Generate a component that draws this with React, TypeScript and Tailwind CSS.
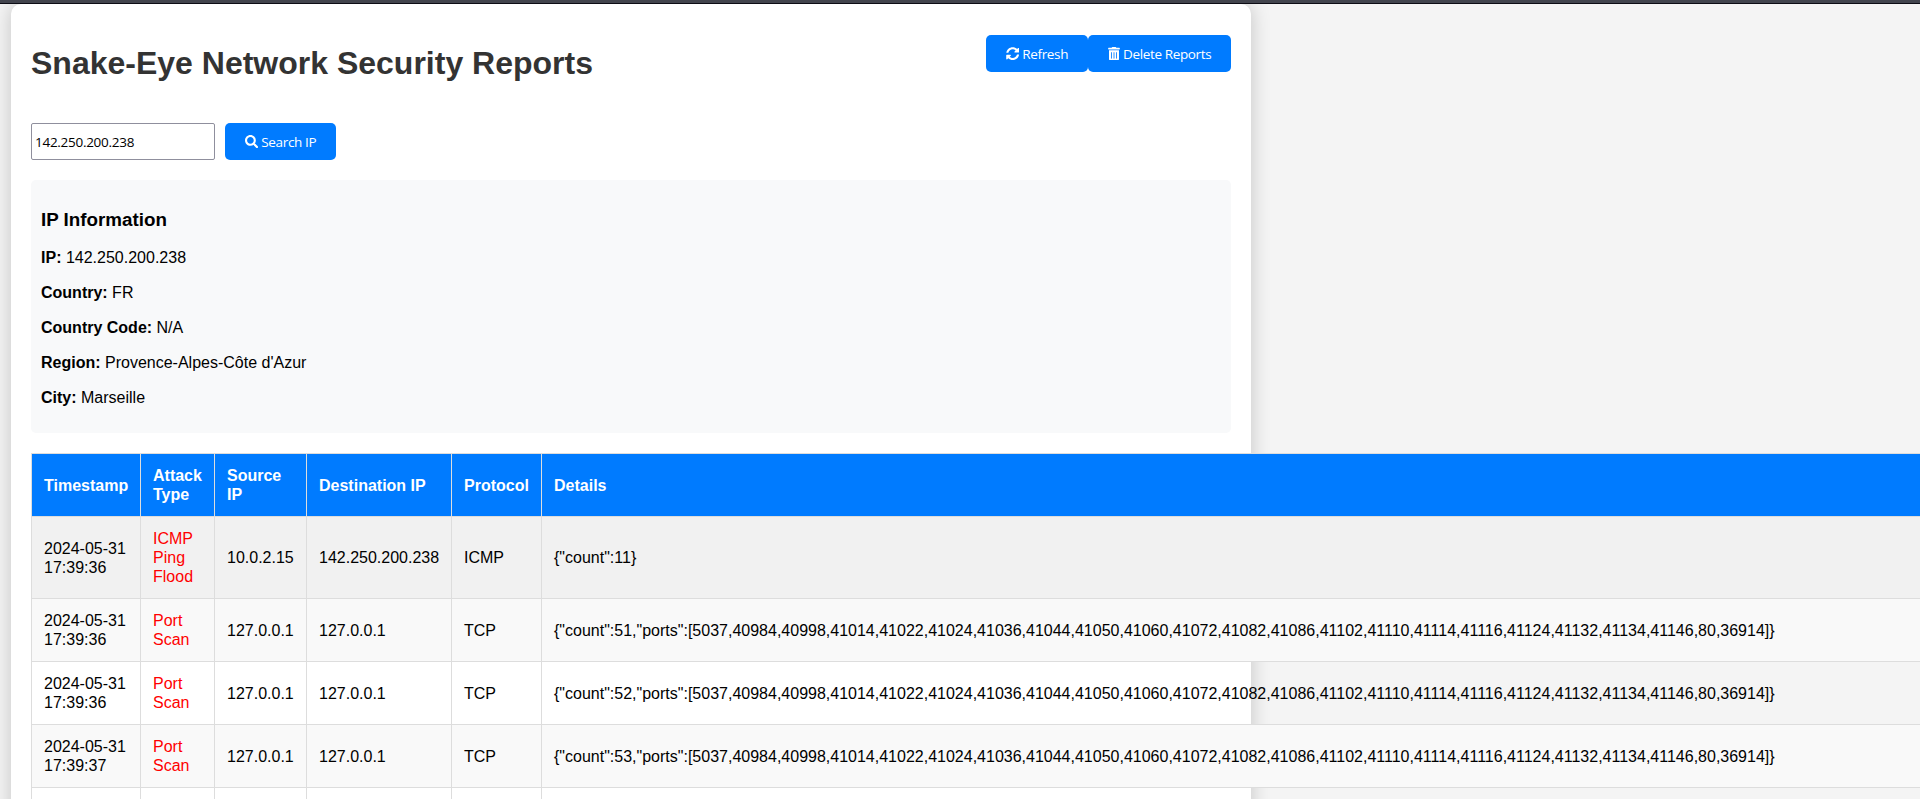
import type { ReactNode } from "react";
import { FaSearch, FaSyncAlt, FaTrashAlt } from "react-icons/fa";

type Report = {
  time: string;
  type: string;
  source: string;
  destination: string;
  protocol: string;
  details: string;
};

const PORTS =
  "5037,40984,40998,41014,41022,41024,41036,41044,41050,41060,41072,41082,41086,41102,41110,41114,41116,41124,41132,41134,41146,80,36914";

const scan = (time: string, count: number): Report => ({
  time,
  type: "Port Scan",
  source: "127.0.0.1",
  destination: "127.0.0.1",
  protocol: "TCP",
  details: `{"count":${count},"ports":[${PORTS}]}`,
});

const reports: Report[] = [
  {
    time: "2024-05-31 17:39:36",
    type: "ICMP Ping Flood",
    source: "10.0.2.15",
    destination: "142.250.200.238",
    protocol: "ICMP",
    details: '{"count":11}',
  },
  scan("2024-05-31 17:39:36", 51),
  scan("2024-05-31 17:39:36", 52),
  scan("2024-05-31 17:39:37", 53),
];

const info = [
  ["IP", "142.250.200.238"],
  ["Country", "FR"],
  ["Country Code", "N/A"],
  ["Region", "Provence-Alpes-Côte d'Azur"],
  ["City", "Marseille"],
];

const headings = ["Timestamp", "Attack Type", "Source IP", "Destination IP", "Protocol", "Details"];

function Button({ icon, width, children }: { icon: ReactNode; width: string; children: ReactNode }) {
  return (
    <button
      className={`flex h-[37px] items-center gap-[3px] whitespace-nowrap rounded-[5px] bg-[#007bff] pl-5 font-['Open_Sans',sans-serif] text-[13.5px] leading-[18px] tracking-[-0.36px] text-white ${width}`}
    >
      {icon}
      <span className="pt-px">{children}</span>
    </button>
  );
}

export default function App() {
  return (
    <div className="h-[799px] w-full overflow-hidden bg-[#f4f4f4] font-['Liberation_Sans',Arial,sans-serif] text-base leading-[19px] text-black">
      <div className="relative z-10 h-1 border-b border-[#0c0c14] bg-[#42444d]" />
      <div className="ml-[11px] h-[900px] w-[1240px] rounded-[10px] bg-white px-5 pt-[31px] shadow-[0_0_20px_rgba(0,0,0,0.2)]">
        <header className="flex h-[88px] items-start justify-between">
          <h1 className="mt-[10px] text-[32px] font-bold leading-[37px] text-[#333]">
            Snake-Eye Network Security Reports
          </h1>
          <div className="flex">
            <Button width="w-[102px]" icon={<FaSyncAlt size={13.333} />}>Refresh</Button>
            <Button width="w-[143px]" icon={<FaTrashAlt size={13.333} className="w-3" />}>Delete Reports</Button>
          </div>
        </header>

        <div className="flex gap-[10px]">
          <input
            readOnly
            value="142.250.200.238"
            className="h-[37px] w-[184px] rounded-[2px] border border-[#8f8f9d] bg-white px-[3px] font-['Open_Sans',sans-serif] text-[13.5px] tracking-[-0.28px] text-black outline-none"
          />
          <Button width="w-[111px]" icon={<FaSearch size={13.333} />}>Search IP</Button>
        </div>

        <section className="mt-5 h-[253px] rounded-[5px] bg-[#f8f9fa] px-[10px] pt-[29px]">
          <h3 className="mb-[18px] text-[18.8px] font-bold leading-[21px]">IP Information</h3>
          <div className="flex flex-col gap-4">
            {info.map(([label, value]) => (
              <p key={label}>
                <strong>{label}:</strong> {value}
              </p>
            ))}
          </div>
        </section>

        <table className="mt-5 w-[2000px] table-fixed border-collapse text-left">
          <colgroup>
            <col className="w-[109px]" />
            <col className="w-[74px]" />
            <col className="w-[92px]" />
            <col className="w-[145px]" />
            <col className="w-[90px]" />
            <col />
          </colgroup>
          <thead>
            <tr className="h-[63px] bg-[#007bff] text-white">
              {headings.map((heading) => (
                <th key={heading} className="border border-[#ddd] px-3 py-0 font-bold">
                  {heading}
                </th>
              ))}
            </tr>
          </thead>
          <tbody>
            {reports.map((row, i) => (
              <tr
                key={row.details}
                className={i === 0 ? "h-[82px] bg-[#f1f1f1]" : i % 2 ? "h-[63px] bg-[#f9f9f9]" : "h-[63px]"}
              >
                <td className="border border-[#ddd] px-3">{row.time}</td>
                <td className="border border-[#ddd] px-3 text-[#ff0000]">{row.type}</td>
                <td className="border border-[#ddd] px-3">{row.source}</td>
                <td className="whitespace-nowrap border border-[#ddd] px-3">{row.destination}</td>
                <td className="border border-[#ddd] px-3">{row.protocol}</td>
                <td className="whitespace-nowrap border border-[#ddd] px-3">{row.details}</td>
              </tr>
            ))}
            <tr className="h-[63px]">
              {headings.map((heading) => (
                <td key={heading} className="border border-[#ddd]" />
              ))}
            </tr>
          </tbody>
        </table>
      </div>
    </div>
  );
}
